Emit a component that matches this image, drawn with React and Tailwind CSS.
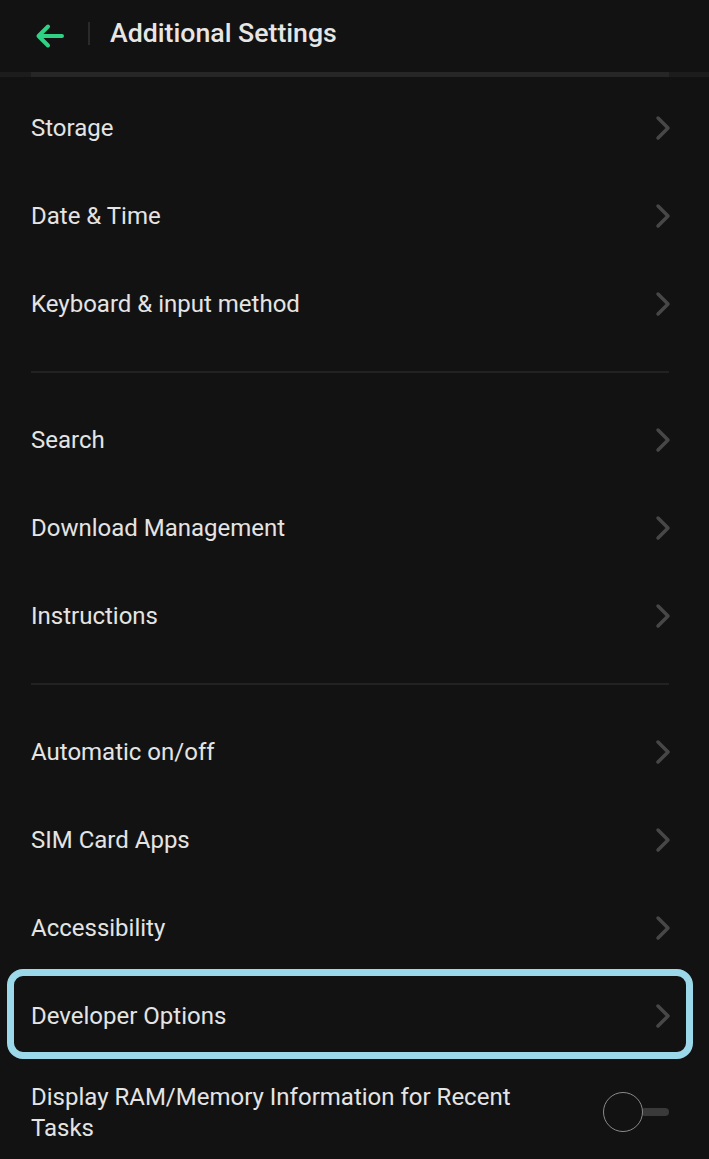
import React from "react";

function Chevron() {
  return (
    <svg width="16" height="26" viewBox="0 0 16 26" className="shrink-0">
      <path d="M3 3 L13 13 L3 23" fill="none" stroke="#474747" strokeWidth="3.5" strokeLinecap="round" strokeLinejoin="round" />
    </svg>
  );
}

function Row({ label, highlight }) {
  return (
    <div className="relative h-[88px] flex items-center justify-between pl-[31px] pr-[38px]">
      <span className="text-[24px] text-[#e4e4e4]">{label}</span>
      <Chevron />
      {highlight && (
        <div className="absolute left-[7px] right-[16px] top-[-3px] bottom-[1px] rounded-[16px] border-[7px] border-[#9bd9ea] pointer-events-none" />
      )}
    </div>
  );
}

function Divider() {
  return (
    <div className="py-[23px] pl-[31px] pr-[40px]">
      <div className="h-[2px] bg-[#222222]" />
    </div>
  );
}

export default function App() {
  return (
    <div className="w-[709px] h-[1159px] overflow-hidden bg-[#121212]" style={{ fontFamily: "Roboto, 'Noto Sans', sans-serif" }}>
      <div className="h-[72px] flex items-center">
        <div className="w-[88px] flex items-center pl-[35px]">
          <svg width="30" height="26" viewBox="0 0 30 26">
            <path d="M27 13 H4 M13 3.5 L3.5 13 L13 22.5" fill="none" stroke="#2fd184" strokeWidth="4" strokeLinecap="round" strokeLinejoin="round" />
          </svg>
        </div>
        <div className="w-[2px] h-[23px] bg-[#2a2a2a] mt-[-6px]" />
        <span className="ml-[20px] text-[26.7px] font-medium text-[#e6e6e6] mt-[-6px]">Additional Settings</span>
      </div>
      <div className="h-[5px] bg-[#1c1c1c] pl-[31px] pr-[40px] flex">
        <div className="flex-1 bg-[#262626]" />
      </div>
      <div className="pt-[7px]">
        <Row label="Storage" />
        <Row label="Date & Time" />
        <Row label="Keyboard & input method" />
        <Divider />
        <Row label="Search" />
        <Row label="Download Management" />
        <Row label="Instructions" />
        <Divider />
        <Row label="Automatic on/off" />
        <Row label="SIM Card Apps" />
        <Row label="Accessibility" />
        <Row label="Developer Options" highlight />
        <div className="flex items-center justify-between pl-[31px] pr-[40px] pt-[22px]">
          <span className="text-[24px] leading-[31px] text-[#e4e4e4] w-[500px]">Display RAM/Memory Information for Recent Tasks</span>
          <div className="relative w-[66px] h-[40px] flex items-center shrink-0 mt-[-2px]">
            <div className="absolute left-[38px] right-0 h-[8px] rounded-full bg-[#3a3a3a]" />
            <div className="relative w-[40px] h-[40px] rounded-full border-[1.5px] border-[#8a8a8a] bg-[#121212]" />
          </div>
        </div>
      </div>
    </div>
  );
}
